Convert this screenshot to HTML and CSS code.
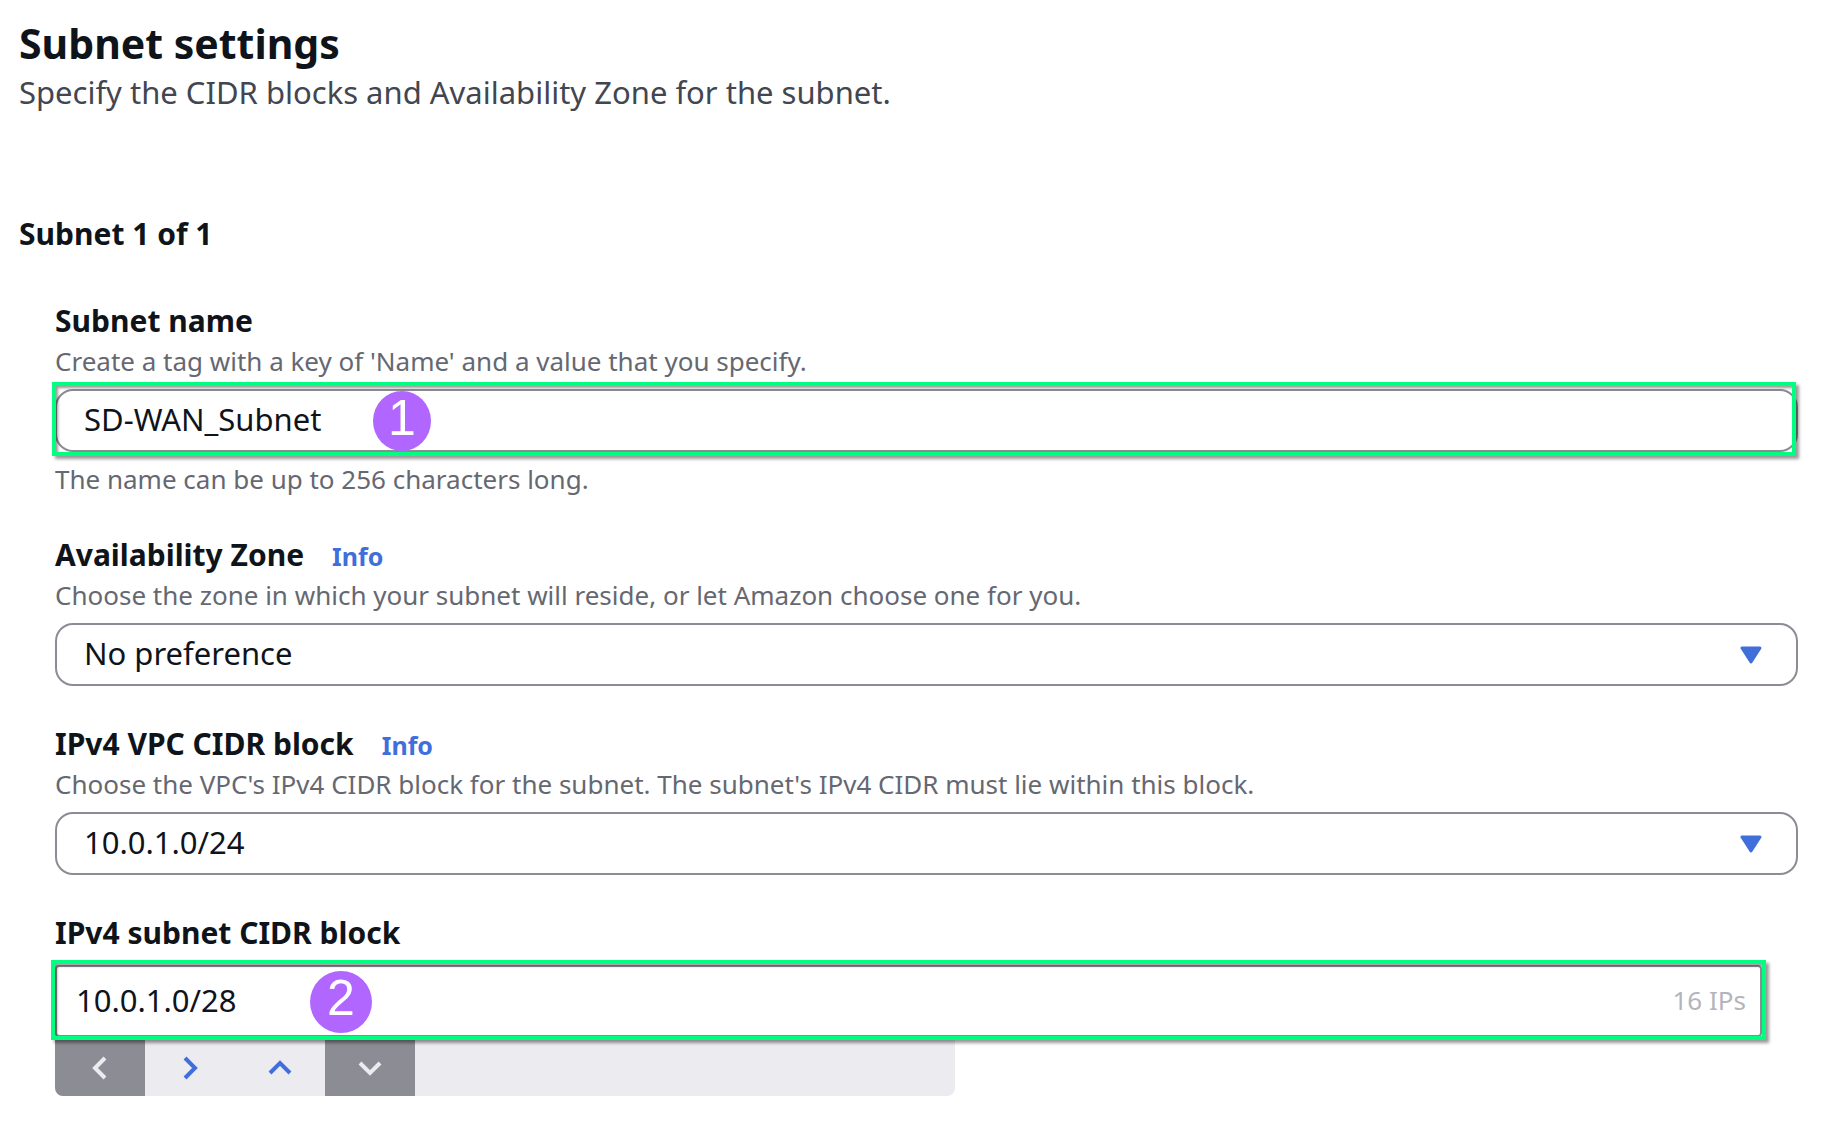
FILE: index.html
```
<!DOCTYPE html>
<html lang="en">
<head>
  <meta charset="utf-8">
  <meta name="viewport" content="width=device-width, initial-scale=1">
  <title>Subnet settings</title>
  <link rel="stylesheet" href="styles.css">
</head>
<body>
  <main class="page">
    <header class="page-header">
      <h1 class="page-title">Subnet settings</h1>
      <p class="page-description">Specify the CIDR blocks and Availability Zone for the subnet.</p>
    </header>

    <section class="subnet">
      <h2 class="subnet-title">Subnet 1 of 1</h2>

      <form class="fields">
        <div class="field">
          <div class="label-row">
            <label class="label" for="subnet-name">Subnet name</label>
          </div>
          <p class="hint" id="subnet-name-hint">Create a tag with a key of 'Name' and a value that you specify.</p>
          <div class="control">
            <input class="box" id="subnet-name" type="text" value="SD-WAN_Subnet" aria-describedby="subnet-name-hint subnet-name-limit">
            <span class="highlight highlight-name"></span>
            <span class="step step-one">1</span>
          </div>
          <p class="hint limit" id="subnet-name-limit">The name can be up to 256 characters long.</p>
        </div>

        <div class="field">
          <div class="label-row">
            <label class="label" for="zone">Availability Zone</label>
            <a class="info" href="#">Info</a>
          </div>
          <p class="hint" id="zone-hint">Choose the zone in which your subnet will reside, or let Amazon choose one for you.</p>
          <div class="control">
            <select class="box" id="zone" aria-describedby="zone-hint">
              <option>No preference</option>
            </select>
            <svg class="caret" viewBox="0 0 22 18" aria-hidden="true"><path d="M2 2h18l-9 14z"/></svg>
          </div>
        </div>

        <div class="field">
          <div class="label-row">
            <label class="label" for="vpc-cidr">IPv4 VPC CIDR block</label>
            <a class="info" href="#">Info</a>
          </div>
          <p class="hint" id="vpc-cidr-hint">Choose the VPC's IPv4 CIDR block for the subnet. The subnet's IPv4 CIDR must lie within this block.</p>
          <div class="control">
            <select class="box" id="vpc-cidr" aria-describedby="vpc-cidr-hint">
              <option>10.0.1.0/24</option>
            </select>
            <svg class="caret" viewBox="0 0 22 18" aria-hidden="true"><path d="M2 2h18l-9 14z"/></svg>
          </div>
        </div>

        <div class="field">
          <div class="label-row">
            <label class="label" for="subnet-cidr">IPv4 subnet CIDR block</label>
          </div>
          <div class="control cidr">
            <div class="cidr-box">
              <input class="cidr-input" id="subnet-cidr" type="text" value="10.0.1.0/28">
              <span class="ip-count">16 IPs</span>
            </div>
            <span class="highlight highlight-cidr"></span>
            <span class="step step-two">2</span>
          </div>
          <div class="stepper">
            <button class="stepper-button" type="button" aria-label="Previous block" disabled>
              <svg class="chevron" viewBox="0 0 24 24"><path d="M17 2 7 12l10 10"/></svg>
            </button>
            <button class="stepper-button" type="button" aria-label="Next block">
              <svg class="chevron" viewBox="0 0 24 24"><path d="m7 2 10 10L7 22"/></svg>
            </button>
            <button class="stepper-button" type="button" aria-label="Larger block">
              <svg class="chevron" viewBox="0 0 24 24"><path d="m2 17 10-10 10 10"/></svg>
            </button>
            <button class="stepper-button" type="button" aria-label="Smaller block" disabled>
              <svg class="chevron" viewBox="0 0 24 24"><path d="m2 7 10 10L22 7"/></svg>
            </button>
          </div>
        </div>
      </form>
    </section>
  </main>
</body>
</html>
```
FILE: styles.css
```
* {
  box-sizing: border-box;
}

body {
  margin: 0;
  background: #fff;
  color: #0f141a;
  font-family: "Noto Sans", "Open Sans", sans-serif;
}

h1,
h2,
p {
  margin: 0;
}

.page {
  padding: 15px 32px 32px 19px;
}

.page-title {
  font-size: 41px;
  line-height: 56px;
  font-weight: 700;
}

.page-description {
  color: #424650;
  font-size: 31px;
  line-height: 42px;
}

.subnet {
  margin-top: 100px;
}

.subnet-title {
  font-size: 30px;
  line-height: 42px;
  font-weight: 700;
}

.fields {
  display: flex;
  flex-direction: column;
  gap: 36px;
  margin-top: 44px;
  padding-left: 36px;
}

.label-row {
  display: flex;
  align-items: baseline;
  gap: 28px;
}

.label {
  font-size: 30px;
  line-height: 44px;
  font-weight: 700;
}

.info {
  color: #406edb;
  font-size: 25px;
  line-height: 36px;
  font-weight: 700;
  text-decoration: none;
}

.hint {
  color: #656871;
  font-size: 26px;
  line-height: 36px;
}

.limit {
  margin-top: 9px;
}

.control {
  position: relative;
  margin-top: 10px;
}

.box {
  appearance: none;
  display: block;
  width: 100%;
  height: 63px;
  margin: 0;
  padding: 0 64px 3px 27px;
  border: 2px solid #8c8c94;
  border-radius: 18px;
  background: #fff;
  color: #0f141a;
  font-family: inherit;
  font-size: 31px;
}

.caret {
  position: absolute;
  top: 23px;
  right: 36px;
  width: 22px;
  height: 18px;
  fill: #406edb;
  stroke: #406edb;
  stroke-width: 3;
  stroke-linejoin: round;
  pointer-events: none;
}

.cidr {
  margin-right: 36px;
}

.cidr-box {
  display: flex;
  align-items: center;
  height: 72px;
  padding: 0 14px 3px 19px;
  border: 2px solid #8c8c94;
  border-radius: 4px;
}

.cidr-input {
  flex: 1;
  min-width: 0;
  padding: 0;
  border: 0;
  background: none;
  color: #0f141a;
  font-family: inherit;
  font-size: 31px;
}

.ip-count {
  color: #b4b4bb;
  font-size: 26px;
}

.highlight {
  position: absolute;
  z-index: 1;
  border: 4px solid #00ff80;
  box-shadow: 3px 3px 3px rgba(0, 0, 0, 0.4), inset 2px 2px 3px rgba(0, 0, 0, 0.4);
  pointer-events: none;
}

.highlight-name {
  inset: -7px 2px -4px -3px;
}

.highlight-cidr {
  inset: -5px -4px -3px -4px;
}

.step {
  position: absolute;
  z-index: 1;
  border-radius: 50%;
  background: #b066ff;
  color: #fff;
  font-family: "Liberation Sans", Arial, sans-serif;
  font-size: 50px;
  line-height: 54px;
  text-align: center;
}

.step-one {
  top: 2px;
  left: 318px;
  width: 58px;
  height: 60px;
}

.step-two {
  top: 6px;
  left: 255px;
  width: 62px;
  height: 62px;
}

.stepper {
  display: flex;
  width: 900px;
  max-width: 100%;
  height: 59px;
  border-radius: 0 0 8px 8px;
  background: #ebebf0;
  overflow: hidden;
}

.stepper-button {
  display: flex;
  align-items: center;
  justify-content: center;
  width: 90px;
  padding: 2px 0 0;
  border: 0;
  background: none;
  color: #406edb;
}

.stepper-button:disabled {
  background: #8c8c94;
  color: #ebebf0;
}

.chevron {
  width: 24px;
  height: 24px;
  fill: none;
  stroke: currentColor;
  stroke-width: 4;
}
```
